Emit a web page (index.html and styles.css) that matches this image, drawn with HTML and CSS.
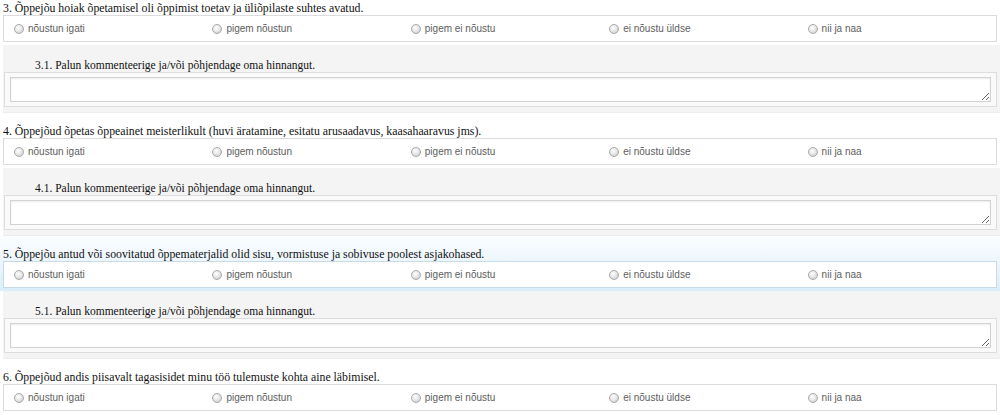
FILE: index.html
```html
<!DOCTYPE html>
<html lang="et">
<head>
<meta charset="utf-8">
<title>Küsimustik</title>
<link rel="stylesheet" href="styles.css">
</head>
<body>
<div class="page">

  <div class="q">
    <div class="q-title">3. Õppejõu hoiak õpetamisel oli õppimist toetav ja üliõpilaste suhtes avatud.</div>
    <div class="options">
      <label class="opt"><span class="radio"></span>nõustun igati</label>
      <label class="opt"><span class="radio"></span>pigem nõustun</label>
      <label class="opt"><span class="radio"></span>pigem ei nõustu</label>
      <label class="opt"><span class="radio"></span>ei nõustu üldse</label>
      <label class="opt"><span class="radio"></span>nii ja naa</label>
    </div>
    <div class="comment">
      <div class="c-label">3.1. Palun kommenteerige ja/või põhjendage oma hinnangut.</div>
      <div class="c-box"><textarea class="c-input"></textarea></div>
    </div>
  </div>

  <div class="q">
    <div class="q-title">4. Õppejõud õpetas õppeainet meisterlikult (huvi äratamine, esitatu arusaadavus, kaasahaaravus jms).</div>
    <div class="options">
      <label class="opt"><span class="radio"></span>nõustun igati</label>
      <label class="opt"><span class="radio"></span>pigem nõustun</label>
      <label class="opt"><span class="radio"></span>pigem ei nõustu</label>
      <label class="opt"><span class="radio"></span>ei nõustu üldse</label>
      <label class="opt"><span class="radio"></span>nii ja naa</label>
    </div>
    <div class="comment">
      <div class="c-label">4.1. Palun kommenteerige ja/või põhjendage oma hinnangut.</div>
      <div class="c-box"><textarea class="c-input"></textarea></div>
    </div>
  </div>

  <div class="q">
    <div class="q-head active">
      <div class="q-title">5. Õppejõu antud või soovitatud õppematerjalid olid sisu, vormistuse ja sobivuse poolest asjakohased.</div>
      <div class="options">
        <label class="opt"><span class="radio"></span>nõustun igati</label>
        <label class="opt"><span class="radio"></span>pigem nõustun</label>
        <label class="opt"><span class="radio"></span>pigem ei nõustu</label>
        <label class="opt"><span class="radio"></span>ei nõustu üldse</label>
        <label class="opt"><span class="radio"></span>nii ja naa</label>
      </div>
    </div>
    <div class="comment">
      <div class="c-label">5.1. Palun kommenteerige ja/või põhjendage oma hinnangut.</div>
      <div class="c-box"><textarea class="c-input"></textarea></div>
    </div>
  </div>

  <div class="q">
    <div class="q-title">6. Õppejõud andis piisavalt tagasisidet minu töö tulemuste kohta aine läbimisel.</div>
    <div class="options">
      <label class="opt"><span class="radio"></span>nõustun igati</label>
      <label class="opt"><span class="radio"></span>pigem nõustun</label>
      <label class="opt"><span class="radio"></span>pigem ei nõustu</label>
      <label class="opt"><span class="radio"></span>ei nõustu üldse</label>
      <label class="opt"><span class="radio"></span>nii ja naa</label>
    </div>
  </div>

</div>
</body>
</html>
```

FILE: styles.css
```css
* { box-sizing: border-box; }

html, body {
  margin: 0;
  padding: 0;
  background: #fff;
  overflow: hidden;
}

.page {
  margin-top: -10px;
  padding-left: 3px;
}

.q {
  display: flex;
  flex-direction: column;
}

.q-head {
  display: flex;
  flex-direction: column;
}

.q-head.active {
  background: linear-gradient(to bottom, #fbfdff 0%, #eef7fd 40%, #d9eefa 100%);
  margin-left: -3px;
  padding-left: 3px;
}

.q-title {
  height: 25px;
  padding-top: 11px;
  font-family: "Liberation Serif", "Times New Roman", serif;
  font-size: 11.8px;
  line-height: 14px;
  color: #111;
  white-space: nowrap;
}

.options {
  width: 994px;
  height: 27px;
  border: 1px solid #dcdcdc;
  background: #fff;
  display: grid;
  grid-template-columns: repeat(5, 1fr);
  align-items: center;
  margin-bottom: 3px;
}

.active .options {
  border-color: #c9dbe6;
}

.opt {
  display: flex;
  align-items: center;
  gap: 4px;
  padding-left: 10px;
  font-family: "Liberation Sans", Arial, sans-serif;
  font-size: 10px;
  color: #5e5e5e;
  line-height: 13px;
}

.radio {
  width: 10px;
  height: 10px;
  border-radius: 50%;
  border: 1px solid #a9a9a9;
  background: radial-gradient(circle at 40% 35%, #ffffff 0%, #e8e8e8 45%, #c4c4c4 100%);
  flex: none;
}

.comment {
  height: 68px;
  background: #f4f4f4;
  border-bottom: 1px solid #ececec;
  padding: 13px 3px 0 1px;
  display: flex;
  flex-direction: column;
}

.c-label {
  padding-left: 31px;
  font-family: "Liberation Serif", "Times New Roman", serif;
  font-size: 11.5px;
  line-height: 14px;
  color: #111;
  height: 14px;
}

.c-box {
  height: 35px;
  border: 1px solid #dddddd;
  background: #fafafa;
  padding: 4px 5px;
}

.c-input {
  display: block;
  width: 100%;
  height: 25px;
  border: 1px solid #d2d2d2;
  box-shadow: inset 0 1px 2px rgba(0,0,0,0.08);
  background: #fff;
  resize: vertical;
  font-family: "Liberation Sans", Arial, sans-serif;
  font-size: 12px;
  margin: 0;
  padding: 2px;
}
```
